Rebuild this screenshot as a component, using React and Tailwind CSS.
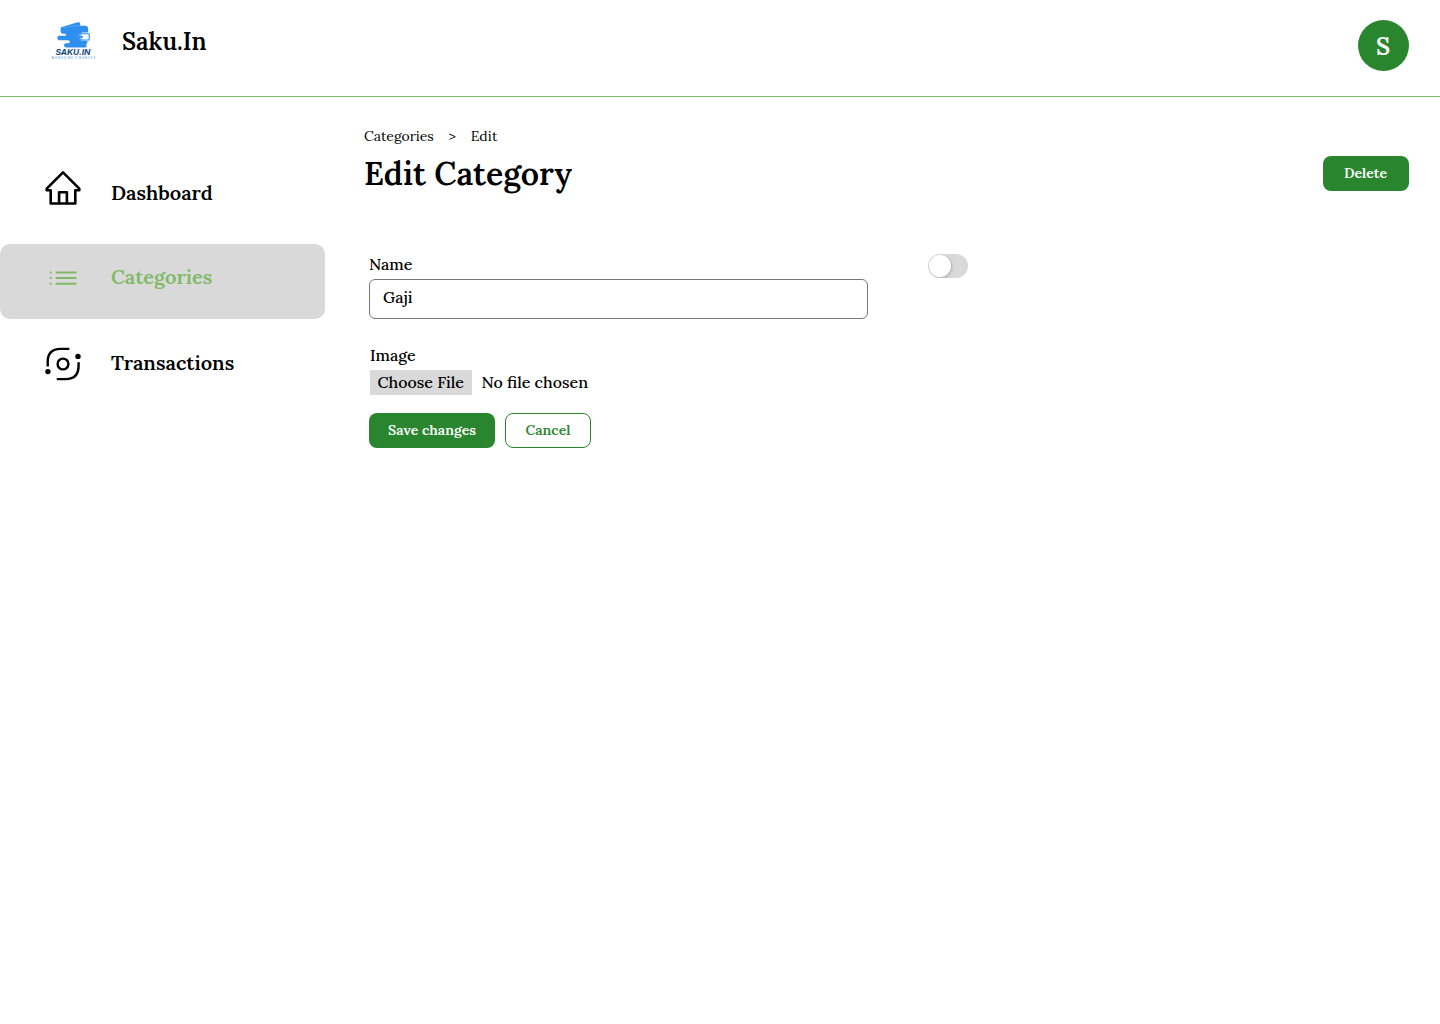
function Logo() {
  return (
    <svg width="50" height="46" viewBox="0 0 50 46" className="block">
      <path d="M13 9.2 L29.8 4.2 Q31.6 3.8 32.2 5.6 L32.3 7.8 H37.5 Q40 8 40.2 10.5 V14.6 H35 Q31 15 30.6 18.8 Q31 22.6 35 22.8 H39.3 V24.8 Q39 26 37.6 26.2 L38.6 27 V28.4 Q38.4 29.4 36.8 29.4 H18 Q16 29.2 16 27.3 Q16 25.4 18 25.2 H20.5 Q21.8 24.9 21.8 23.8 Q21.6 22.4 20 22.2 H11 Q9.3 22 9.3 20 Q9.3 18 11 17.8 H17.2 Q18.2 17.5 18 16.7 Q17.8 16 16.6 15.8 H14.6 Q12.6 15.6 12.5 13 Z" fill="#2f8ff0" />
      <path d="M15 9.4 L32 7.4" stroke="#8ec6f9" strokeWidth=".4" />
      <path d="M33 15.8 H41.2 V22 H33.6 L31.5 20.8 V17.4 Z" fill="#fff" stroke="#2f8ff0" strokeWidth="1.1" />
      <circle cx="33.4" cy="19" r="1.4" fill="#2f8ff0" />
      <text x="7.5" y="36.6" textLength="35" lengthAdjust="spacingAndGlyphs" fill="#174a80" fontSize="7.6" fontWeight="700" fontStyle="italic" fontFamily="Inter, sans-serif">SAKU.IN</text>
      <text x="3.6" y="41.4" textLength="43.6" fill="#5aa2e6" fontSize="2.8" fontFamily="Inter, sans-serif">MANAGING FINANCES</text>
    </svg>
  );
}

function HomeIcon() {
  return (
    <svg width="36" height="36" viewBox="0 0 36 36" fill="none" stroke="#000" strokeWidth="2.6" strokeLinejoin="round">
      <path d="M5.7 20.2 H1.7 V18.6 L18 2.4 L34.3 18.6 V20.2 H30.3 V33.5 H5.7 Z" />
      <path d="M14.1 33 V22.3 H21.9 V33" />
    </svg>
  );
}

function ListIcon() {
  return (
    <svg width="36" height="36" viewBox="0 0 36 36" fill="none" stroke="#80b966" strokeWidth="2">
      <path d="M10.7 12.4 H31.5 M10.7 18 H31.5 M10.7 23.7 H31.5" />
      <path d="M4.8 12.4 H6.6 M4.8 18 H6.6 M4.8 23.7 H6.6" />
    </svg>
  );
}

function TransactionsIcon() {
  return (
    <svg width="36" height="36" viewBox="0 0 36 36" fill="none" stroke="#000" strokeWidth="2.4">
      <path d="M2.7 20.5 V16 Q2.7 2.9 15.5 2.9 H24.3" />
      <path d="M33.6 16.2 V19.5 Q33.6 33.1 20.8 33.1 H11.8" />
      <circle cx="18" cy="18" r="5.4" />
      <circle cx="33" cy="10.4" r="2.7" fill="#000" stroke="none" />
      <circle cx="2.9" cy="25.6" r="2.7" fill="#000" stroke="none" />
    </svg>
  );
}

export default function App() {
  return (
    <div className="h-[1024px] w-[1440px] overflow-hidden bg-white font-['Lora','Liberation_Serif',serif] font-medium text-black">
      <header className="flex h-[97px] items-start justify-between border-b border-[#80b966] pr-[31px] pl-12">
        <div className="flex pt-[18px]">
          <Logo />
          <span className="ml-6 text-2xl leading-[47px] font-semibold">Saku.In</span>
        </div>
        <div className="mt-5 flex size-[51px] items-center justify-center rounded-full bg-[#2a862e] pt-[2px] pr-px text-2xl font-semibold text-white">S</div>
      </header>

      <div className="flex">
        <aside className="w-[325px] shrink-0 pt-[55px]">
          <nav className="text-xl font-semibold">
            <a className="flex h-[75px] pt-[18px] pl-[45px]">
              <HomeIcon />
              <span className="ml-[30px] leading-[46px]">Dashboard</span>
            </a>
            <a className="mt-[17px] flex h-[75px] rounded-[10px] bg-[#d9d9d9] pt-4 pl-[45px] text-[#80b966]">
              <ListIcon />
              <span className="ml-[30px] leading-[34px]">Categories</span>
            </a>
            <a className="flex h-[75px] pt-[27px] pl-[45px]">
              <TransactionsIcon />
              <span className="ml-[30px] leading-[34px]">Transactions</span>
            </a>
          </nav>
        </aside>

        <main className="flex-1 pt-[29px] pr-[31px] pl-[39px]">
          <div className="flex h-5 gap-[14.7px] text-sm leading-5 font-normal">
            <span>Categories</span>
            <span>&gt;</span>
            <span>Edit</span>
          </div>
          <div className="mt-[10px] flex h-[35px] items-center justify-between">
            <h1 className="text-[32px] leading-[35px] font-semibold">Edit Category</h1>
            <button className="h-[35px] w-[86px] rounded-lg bg-[#2a862e] pr-px pb-px text-sm font-semibold text-white">Delete</button>
          </div>

          <form className="mt-[63px] pl-[5px] text-base">
            <div className="flex">
              <div className="w-[499px]">
                <label className="block h-[25px] leading-[21px]">Name</label>
                <div className="h-10 rounded-md border border-[#777] px-[13px] leading-[35px]">Gaji</div>
              </div>
              <div className="ml-[60px] flex h-6 w-10 items-center overflow-hidden rounded-full bg-[#d9d9d9] pl-px">
                <span className="size-[22px] rounded-full bg-white shadow-[1px_1px_3px_rgba(0,0,0,0.2)]" />
              </div>
            </div>
            <div className="mt-[26px] pl-px">
              <div className="h-[25px] leading-[21px]">Image</div>
              <div className="flex h-[25px] leading-[25px]">
                <span className="w-[102px] bg-[#d9d9d9] pl-[7.5px] whitespace-nowrap">Choose File</span>
                <span className="ml-[9.5px]">No file chosen</span>
              </div>
            </div>
            <div className="mt-[18px] flex gap-[10px] text-sm font-semibold">
              <button type="button" className="h-[35px] w-[126px] rounded-lg bg-[#2a862e] pb-px text-white">Save changes</button>
              <button type="button" className="h-[35px] w-[86px] rounded-lg border border-[#2a862e] pb-px text-[#2a862e]">Cancel</button>
            </div>
          </form>
        </main>
      </div>
    </div>
  );
}
